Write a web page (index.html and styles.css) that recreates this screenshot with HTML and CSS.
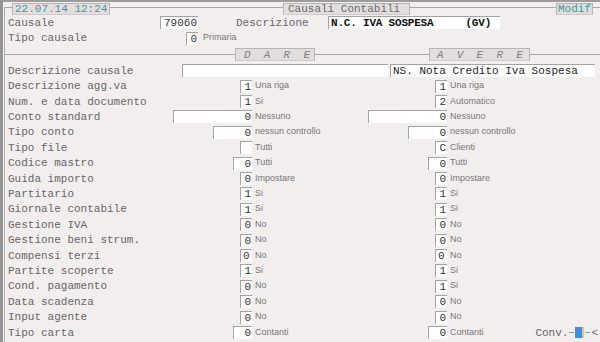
FILE: index.html
```html
<!DOCTYPE html>
<html lang="it">
<head>
    <meta charset="UTF-8">
    <meta name="viewport" content="width=device-width, initial-scale=1.0">
    <title>Causali Contabili</title>
    <link rel="stylesheet" href="styles.css">
</head>
<body>
<div class="screen">
    <div class="titlebar">
        <span class="corner"></span>
        <span class="tab date">22.07.14 12:24</span>
        <span class="rule r-title"></span>
        <span class="tab title">Causali Contabili</span>
        <span class="rule r-mode"></span>
        <span class="tab mode">Modif</span>
        <span class="rule fill"></span>
    </div>

    <div class="frame">
        <div class="head-row">
            <span class="label">Causale</span>
            <span class="field code">79060</span>
            <span class="label desc-label">Descrizione</span>
            <span class="field name">N.C. IVA SOSPESA     (GV)</span>
        </div>
        <div class="head-row">
            <span class="label">Tipo causale</span>
            <span class="field w1 tipo">0</span>
            <span class="note tipo-note">Primaria</span>
        </div>

        <div class="separator">
            <span class="rule r-dare"></span>
            <span class="tab side dare">D  A  R  E</span>
            <span class="rule r-avere"></span>
            <span class="tab side avere">A  V  E  R  E</span>
            <span class="rule fill"></span>
        </div>

        <div class="row wide">
            <span class="label">Descrizione causale</span>
            <span class="field text"></span>
            <span class="field text">NS. Nota Credito Iva Sospesa</span>
        </div>
        <div class="row">
            <span class="label">Descrizione agg.va</span>
            <span class="field w1">1</span><span class="note">Una riga</span>
            <span class="field w1">1</span><span class="note">Una riga</span>
        </div>
        <div class="row">
            <span class="label">Num. e data documento</span>
            <span class="field w1">1</span><span class="note">Si</span>
            <span class="field w1">2</span><span class="note">Automatico</span>
        </div>
        <div class="row">
            <span class="label">Conto standard</span>
            <span class="field w8">0</span><span class="note">Nessuno</span>
            <span class="field w8">0</span><span class="note">Nessuno</span>
        </div>
        <div class="row">
            <span class="label">Tipo conto</span>
            <span class="field w4">0</span><span class="note">nessun controllo</span>
            <span class="field w4">0</span><span class="note">nessun controllo</span>
        </div>
        <div class="row">
            <span class="label">Tipo file</span>
            <span class="field w1"></span><span class="note">Tutti</span>
            <span class="field w1">C</span><span class="note">Clienti</span>
        </div>
        <div class="row">
            <span class="label">Codice mastro</span>
            <span class="field w2">0</span><span class="note">Tutti</span>
            <span class="field w2">0</span><span class="note">Tutti</span>
        </div>
        <div class="row">
            <span class="label">Guida importo</span>
            <span class="field w1">0</span><span class="note">Impostare</span>
            <span class="field w1">0</span><span class="note">Impostare</span>
        </div>
        <div class="row">
            <span class="label">Partitario</span>
            <span class="field w1">1</span><span class="note">Si</span>
            <span class="field w1">1</span><span class="note">Si</span>
        </div>
        <div class="row">
            <span class="label">Giornale contabile</span>
            <span class="field w1">1</span><span class="note">Si</span>
            <span class="field w1">1</span><span class="note">Si</span>
        </div>
        <div class="row">
            <span class="label">Gestione IVA</span>
            <span class="field w1">0</span><span class="note">No</span>
            <span class="field w1">0</span><span class="note">No</span>
        </div>
        <div class="row">
            <span class="label">Gestione beni strum.</span>
            <span class="field w1">0</span><span class="note">No</span>
            <span class="field w1">0</span><span class="note">No</span>
        </div>
        <div class="row">
            <span class="label">Compensi terzi</span>
            <span class="field w1 left">0</span><span class="note">No</span>
            <span class="field w1 left">0</span><span class="note">No</span>
        </div>
        <div class="row">
            <span class="label">Partite scoperte</span>
            <span class="field w1">1</span><span class="note">Si</span>
            <span class="field w1">1</span><span class="note">Si</span>
        </div>
        <div class="row">
            <span class="label">Cond. pagamento</span>
            <span class="field w1">0</span><span class="note">No</span>
            <span class="field w1">1</span><span class="note">Si</span>
        </div>
        <div class="row">
            <span class="label">Data scadenza</span>
            <span class="field w1">0</span><span class="note">No</span>
            <span class="field w1">0</span><span class="note">No</span>
        </div>
        <div class="row">
            <span class="label">Input agente</span>
            <span class="field w1">0</span><span class="note">No</span>
            <span class="field w1">0</span><span class="note">No</span>
        </div>
        <div class="row">
            <span class="label">Tipo carta</span>
            <span class="field w2">0</span><span class="note">Contanti</span>
            <span class="field w2">0</span>
            <span class="last">
                <span class="note">Contanti</span>
                <span class="conv">Conv.<span class="tick"></span><span class="knob"></span><span class="tick"></span>&lt;</span>
            </span>
        </div>
    </div>
</div>
</body>
</html>
```

FILE: styles.css
```css
* {
    margin: 0;
    padding: 0;
    box-sizing: border-box;
}

body {
    background-color: #f2eeee;
    font-family: "Liberation Mono", "Courier New", monospace;
    font-size: 11px;
    color: #555;
    overflow: hidden;
}

.screen {
    width: 600px;
    height: 342px;
    border-top: 2px solid #9c9c9c;
    border-left: 3px solid #959595;
    padding-left: 1px;
    overflow: hidden;
}

/* barra del titolo */
.titlebar {
    display: flex;
    align-items: flex-start;
    height: 13px;
    padding-top: 1px;
}

.corner {
    width: 8px;
    height: 8px;
    margin-top: 4px;
    border-top: 1px solid #a8a8a8;
    border-left: 1px solid #a8a8a8;
}

.rule {
    height: 1px;
    margin-top: 4px;
    background-color: #a8a8a8;
}

.rule.fill { flex: 1; }
.r-title { width: 173px; }
.r-mode { width: 146px; }
.r-dare { width: 230px; }
.r-avere { width: 114px; }

.tab {
    height: 12px;
    line-height: 11px;
    white-space: pre;
    background-color: #e2dede;
    border: 1px solid #b8b4b4;
    border-bottom-color: #cfcbcb;
}

.date {
    width: 98px;
    padding-left: 2px;
    color: #3a9c9c;
}

.title {
    width: 127px;
    padding-left: 4px;
    color: #6a6a6a;
}

.mode {
    width: 37px;
    padding-left: 1px;
    color: #3a9c9c;
}

/* riquadro */
.frame {
    border-left: 1px solid #b4b0b0;
    padding-left: 3px;
    height: 327px;
}

.head-row {
    display: grid;
    grid-template-columns: 152px 38px 38px 92px 172px;
    align-items: center;
    height: 15.5px;
}

.head-row .label { grid-column: 1; }
.head-row .code { grid-column: 2; }
.head-row .desc-label { grid-column: 4; }
.head-row .name { grid-column: 5; }
.head-row .tipo { grid-column: 2; }
.head-row .tipo-note {
    grid-column: 3 / span 2;
    padding-left: 5px;
}

.separator {
    display: flex;
    align-items: center;
    height: 17px;
    margin-left: -3px;
}

.separator .rule {
    margin-top: 0;
}

.side {
    height: 13px;
    line-height: 12px;
    font-style: italic;
    color: #808080;
}

.dare {
    width: 80px;
    padding-left: 8px;
}

.avere {
    width: 101px;
    padding-left: 7px;
}

.row {
    display: grid;
    grid-template-columns: 160px 84px 115px 80px 1fr;
    align-items: center;
    height: 15.42px;
}

.row.wide {
    grid-template-columns: 172px 206px 205px;
    column-gap: 2px;
}

.label {
    color: #676767;
    white-space: pre;
}

.field {
    height: 13px;
    line-height: 12px;
    padding: 0 1px;
    background-color: #fff;
    border-top: 1px solid #a4a4a4;
    border-left: 1px solid #a4a4a4;
    color: #333;
    text-align: right;
    white-space: pre;
    justify-self: end;
}

.field.left {
    text-align: left;
    padding-left: 2px;
}

.field.text {
    width: 100%;
    text-align: left;
    padding-left: 2px;
    color: #1e1e1e;
}

.code {
    width: 38px;
}

.name {
    width: 172px;
    text-align: left;
    padding-left: 2px;
    color: #111;
    font-weight: bold;
    letter-spacing: -0.2px;
}

.w1 { width: 12px; }
.w2 { width: 19px; }
.w4 { width: 39px; }
.w8 { width: 79px; }

.note {
    font-family: "Liberation Sans", Arial, sans-serif;
    font-size: 9px;
    color: #777;
    padding-left: 3px;
    margin-top: -2px;
    white-space: nowrap;
}

.last {
    display: flex;
    align-items: center;
}

.conv {
    display: flex;
    align-items: center;
    margin-left: auto;
    margin-right: 2px;
    color: #666;
}

.tick {
    width: 5px;
    height: 1px;
    margin: 0 1px;
    background-color: #999;
}

.knob {
    width: 9px;
    height: 11px;
    background-color: #3b8fe8;
    border-right: 2px solid #f2c35e;
}
```
